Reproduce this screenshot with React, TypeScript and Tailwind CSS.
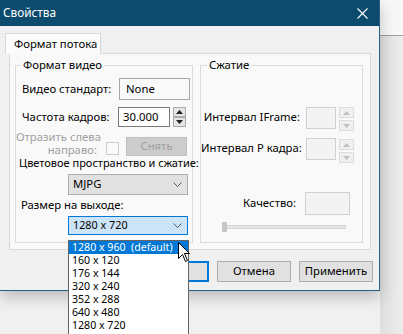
import React from "react";

const sizes = [
  "1280 x 960  (default)",
  "160 x 120",
  "176 x 144",
  "320 x 240",
  "352 x 288",
  "640 x 480",
  "1280 x 720",
  "1024 x 576",
];

function Spinner({ disabled = false, half = 10, gap = 1 }: { disabled?: boolean; half?: number; gap?: number }) {
  const box = disabled
    ? "border-[#dcdcdc] bg-[#f0f0f0]"
    : "border-[#adadad] bg-[#e5e5e5]";
  const fill = disabled ? "#c0c0c0" : "#202020";
  return (
    <div className="flex flex-col" style={{ gap }}>
      <div className={`border flex items-center justify-center ${box}`} style={{ height: half }}>
        <svg width="7" height="4" viewBox="0 0 7 4">
          <path d="M0 4 L3.5 0 L7 4 Z" fill={fill} />
        </svg>
      </div>
      <div className={`border flex items-center justify-center ${box}`} style={{ height: half }}>
        <svg width="7" height="4" viewBox="0 0 7 4">
          <path d="M0 0 L3.5 4 L7 0 Z" fill={fill} />
        </svg>
      </div>
    </div>
  );
}

function Chevron() {
  return (
    <svg width="9" height="6" viewBox="0 0 9 6" className="ml-auto mr-[5px]">
      <path d="M0.5 0.5 L4.5 4.5 L8.5 0.5" fill="none" stroke="#5a5a5a" strokeWidth="1" />
    </svg>
  );
}

export default function App() {
  return (
    <div className="relative w-[403px] h-[334px] overflow-hidden bg-[#f0f0f0] font-['Segoe_UI','Noto_Sans',sans-serif] text-[11.3px] text-black whitespace-nowrap flex">
      {/* dialog window */}
      <div className="w-[380px] flex flex-col">
        <div className="relative z-10 h-[291px] flex flex-col border-r border-b border-[#245f8a] shadow-[0_6px_14px_rgba(0,0,0,0.22)] bg-[#f0f0f0]">
          {/* title bar */}
          <div className="h-[26px] bg-[#0c4a6e] flex items-center pl-[3px] pr-[11px] text-white">
            <span className="text-[11.8px] leading-none">Свойства</span>
            <svg width="11" height="11" viewBox="0 0 11 11" className="ml-auto">
              <path d="M0.5 0.5 L10.5 10.5 M10.5 0.5 L0.5 10.5" stroke="#ffffff" strokeWidth="1.1" />
            </svg>
          </div>

          <div className="flex flex-col pt-[7px]">
            {/* tab header */}
            <div className="flex pl-[5px]">
              <div className="w-[96px] h-[21px] bg-[#fbfbfb] border border-b-0 border-[#d9d9d9] flex items-center pl-[8px] -mb-px relative z-10">
                Формат потока
              </div>
            </div>

            {/* tab page */}
            <div className="ml-[9px] w-[362px] h-[197px] border border-[#d9d9d9] bg-[#f9f9f9] flex pl-[5px] pt-[3px]">
              {/* video format group */}
              <fieldset className="min-w-0 shrink-0 w-[178px] h-[186px] border border-[#dcdcdc] flex flex-col">
                <legend className="ml-[5px] px-[2px] leading-[16px]">Формат видео</legend>

                <div className="flex items-center h-[22px] mt-[5px]">
                  <span className="w-[103px] pl-[6px]">Видео стандарт:</span>
                  <div className="w-[71px] h-[22px] border border-[#a8a8a8] flex items-center pl-[6px]">None</div>
                </div>

                <div className="flex items-center h-[20px] mt-[7px]">
                  <span className="w-[102px] pl-[6px]">Частота кадров:</span>
                  <div className="w-[52px] h-[20px] border border-[#7a7a7a] bg-white flex items-center pl-[4px]">30.000</div>
                  <div className="ml-[3px] w-[13px]">
                    <Spinner half={10} gap={0} />
                  </div>
                </div>

                <div className="flex items-start h-[26px] mt-[3px] text-[#a0a0a0]">
                  <div className="w-[81px] text-right leading-[13px]">
                    Отразить слева
                    <br />
                    направо:
                  </div>
                  <div className="ml-[9px] mt-[12px] w-[13px] h-[13px] border border-[#cccccc] bg-[#f9f9f9]" />
                  <div className="ml-[7px] mt-[7px] w-[61px] h-[19px] border border-[#bfbfbf] bg-[#cccccc] flex items-center justify-center">
                    Снять
                  </div>
                </div>

                <div className="h-[14px] leading-[14px] pl-[3px] text-[11px]">Цветовое пространство и сжатие:</div>

                <div className="ml-[52px] mt-[4px] w-[120px] h-[21px] border border-[#adadad] bg-[#e1e1e1] flex items-center pl-[4px]">
                  MJPG
                  <Chevron />
                </div>

                <div className="h-[14px] leading-[14px] pl-[5px] mt-[3px]">Размер на выходе:</div>

                <div className="ml-[52px] mt-[4px] w-[120px] h-[19px] border border-[#0078d7] bg-[#cce4f7] flex items-center pl-[4px] text-[10.8px]">
                  1280 x 720
                  <Chevron />
                </div>
              </fieldset>

              {/* compression group */}
              <fieldset className="min-w-0 shrink-0 ml-[7px] w-[163px] h-[186px] border border-[#dcdcdc] flex flex-col">
                <legend className="ml-[6px] px-[2px] leading-[16px]">Сжатие</legend>

                <div className="flex items-start h-[22px] mt-[34px]">
                  <span className="w-[99px] text-right leading-[20px]">Интервал IFrame:</span>
                  <div className="ml-[6px] w-[30px] h-[22px] border border-[#d0d0d0] bg-[#f3f3f3]" />
                  <div className="ml-[3px] w-[15px]">
                    <Spinner disabled half={11} gap={2} />
                  </div>
                </div>

                <div className="flex items-start h-[22px] mt-[9px]">
                  <span className="w-[99px] text-right leading-[20px]">Интервал P кадра:</span>
                  <div className="ml-[6px] w-[30px] h-[22px] border border-[#d0d0d0] bg-[#f3f3f3]" />
                  <div className="ml-[3px] w-[15px] mt-[1px]">
                    <Spinner disabled half={11} gap={2} />
                  </div>
                </div>

                <div className="flex items-center h-[23px] mt-[32px]">
                  <span className="w-[95px] text-right">Качество:</span>
                  <div className="ml-[9px] w-[45px] h-[23px] border border-[#d0d0d0] bg-[#f3f3f3]" />
                </div>

                <div className="relative ml-[21px] mt-[7px] w-[124px] h-[10px] flex items-center">
                  <div className="w-full h-[4px] border border-[#d6d6d6] bg-[#e7e7e7]" />
                  <div className="absolute left-0 top-0 w-[5px] h-[10px] bg-[#c6c6c6]" />
                </div>
              </fieldset>
            </div>

            {/* buttons */}
            <div className="flex justify-end gap-[8px] pr-[6px] mt-[11px]">
              <div className="w-[71px] h-[21px] border-2 border-[#0078d7] bg-[#e1e1e1] flex items-center justify-center">OK</div>
              <div className="w-[74px] h-[21px] border border-[#adadad] bg-[#e1e1e1] flex items-center justify-center">Отмена</div>
              <div className="w-[74px] h-[21px] border border-[#adadad] bg-[#e1e1e1] flex items-center justify-center">Применить</div>
            </div>
          </div>
        </div>
      </div>

      {/* window behind, on the right */}
      <div className="flex-1 flex flex-col">
        <div className="h-[35px] bg-[#f7f7f7]" />
        <div className="h-px bg-[#a0a0a0]" />
        <div className="flex-1 bg-gradient-to-r from-[#dedede] to-[#ededed]" />
      </div>

      {/* open combo list */}
      <div className="absolute z-20 left-[68px] top-[240px] w-[121px] h-[110px] border border-[#646464] bg-white text-[10.6px]">
        {sizes.map((s, i) => (
          <div
            key={s}
            className={`h-[13px] leading-[13px] pl-[3px] whitespace-pre ${i === 0 ? "bg-[#0078d7] text-white" : ""}`}
          >
            {s}
          </div>
        ))}
      </div>

      {/* mouse pointer */}
      <svg className="absolute z-30 left-[178px] top-[242px]" width="13" height="21" viewBox="0 0 13 21">
        <path d="M0.5 0.5 L0.5 16.5 L4.5 12.5 L7.5 19.5 L9.5 18.5 L6.5 11.5 L11.5 11.5 Z" fill="#ffffff" stroke="#000000" strokeWidth="1" strokeLinejoin="round" />
      </svg>
    </div>
  );
}
